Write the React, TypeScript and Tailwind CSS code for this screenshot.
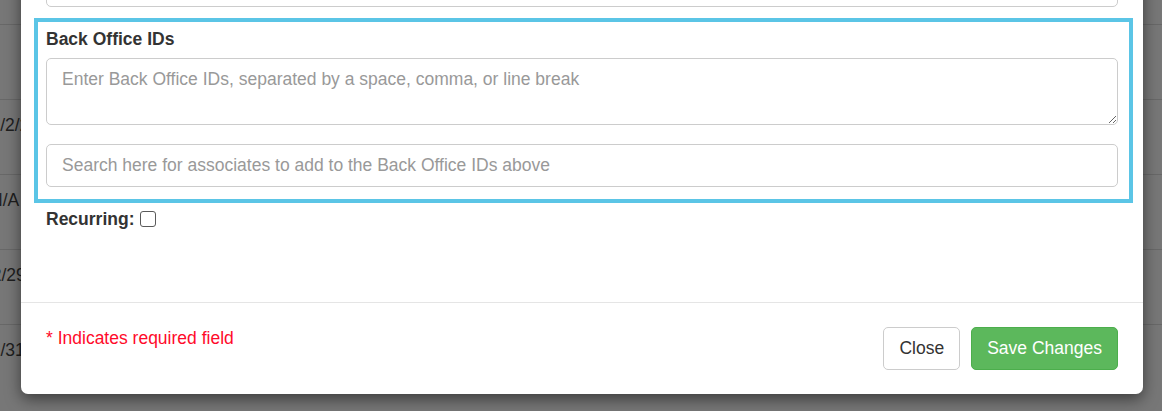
import * as React from 'react';

const font = "font-['Liberation_Sans',Arial,Helvetica,sans-serif]";

const rows = [
  { text: '', offset: 'ml-0' },
  { text: '11/2/2023', offset: 'ml-[-18px]' },
  { text: 'N/A', offset: 'ml-[-10px]' },
  { text: '12/29/2023', offset: 'ml-[-18px]' },
  { text: '12/31/2023', offset: 'ml-[-19px]' }
];

export default function App() {
  return (
    <div
      className={`relative w-[1162px] h-[411px] overflow-hidden bg-[#777777] ${font}`}
    >
      {/* table behind the backdrop */}
      <div className="flex flex-col pt-[24px]">
        {rows.map((row, i) => (
          <div
            key={i}
            className="h-[75px] border-t border-[#686868] pt-[13px] text-[17.5px] leading-[25px] text-[#1e1e1e]"
          >
            <span className={`inline-block ${row.offset}`}>{row.text}</span>
          </div>
        ))}
      </div>

      {/* modal */}
      <div className="absolute left-[21px] top-[-56px] w-[1122px] bg-white rounded-[7px] shadow-[0_5px_15px_rgba(0,0,0,0.5)] text-[17.5px] leading-[25px] text-[#333]">
        <div className="px-[25px] pt-[20px] pb-[70px]">
          <input
            type="text"
            className="block w-full h-[43px] border border-[#ccc] rounded-[5px] px-[15px] outline-none"
          />
          <div className="mt-[11px] ml-[-12px] mr-[-15px] border-4 border-[#5bc5e6] pl-[8px] pr-[11px] pt-[5px] pb-[12px]">
            <label className="block font-bold mb-[6px]">Back Office IDs</label>
            <textarea
              className="block w-full h-[67px] border border-[#ccc] rounded-[5px] px-[15px] py-[7.5px] outline-none placeholder:text-[#999]"
              placeholder="Enter Back Office IDs, separated by a space, comma, or line break"
            />
            <input
              type="text"
              className="block w-full h-[43px] mt-[19px] border border-[#ccc] rounded-[5px] px-[15px] outline-none placeholder:text-[#999]"
              placeholder="Search here for associates to add to the Back Office IDs above"
            />
          </div>
          <div className="mt-[4px] flex items-start">
            <label className="font-bold">Recurring:</label>
            <input
              type="checkbox"
              className="appearance-none ml-[6px] mt-[4px] w-[16px] h-[16px] border border-[#5a5a5a] rounded-[3px] bg-white"
            />
          </div>
        </div>
        <div className="border-t border-[#e5e5e5] px-[25px] pt-[24px] pb-[24px] flex justify-between items-start">
          <span className="text-[#ff0a2a] mt-[-1px]">* Indicates required field</span>
          <div className="flex gap-[11px]">
            <button className="h-[43px] px-[15px] border border-[#ccc] rounded-[5px] bg-white text-[#333]">
              Close
            </button>
            <button className="h-[43px] px-[15px] border border-[#4cae4c] rounded-[5px] bg-[#5cb85c] text-white">
              Save Changes
            </button>
          </div>
        </div>
      </div>
    </div>
  );
}
